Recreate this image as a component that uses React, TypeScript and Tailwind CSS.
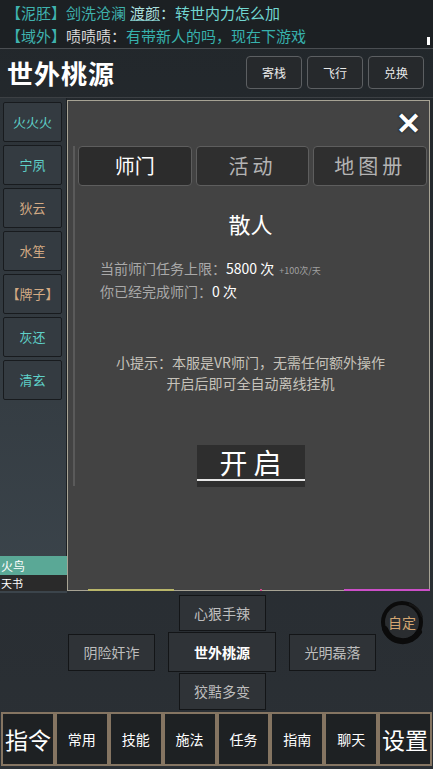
import React from 'react';

const font = { fontFamily: '"Noto Sans CJK SC", "Noto Sans", sans-serif' };

const sideItems = [
  { name: '火火火', color: 'text-[#5fd1c9]' },
  { name: '宁夙', color: 'text-[#5fd1c9]' },
  { name: '狄云', color: 'text-[#d3aa84]' },
  { name: '水笙', color: 'text-[#d3aa84]' },
  { name: '【牌子】', color: 'text-[#d3aa84]' },
  { name: '灰还', color: 'text-[#5fd1c9]' },
  { name: '清玄', color: 'text-[#5fd1c9]' },
];

const navItems = ['指令', '常用', '技能', '施法', '任务', '指南', '聊天', '设置'];

export default function App() {
  return (
    <div
      style={font}
      className="w-[433px] h-[769px] overflow-hidden flex flex-col bg-gradient-to-b from-[#22272b] to-[#2b3035] text-white"
    >
      {/* chat */}
      <div className="h-[49px] bg-[#1c2023] px-[6px] pt-[1px] text-[15px] leading-[23px] relative border-b border-[#4a4e52]">
        <div className="flex">
          <span className="text-[#3fb2ae]">【泥胚】</span>
          <span className="text-[#3fb2ae] mr-[4px]">剑洗沧澜</span>
          <span className="text-[#a9dfdc] underline decoration-[#6aa]">渡颜</span>
          <span className="text-[#a9dfdc]">：</span>
          <span className="text-[#71d6d1]">转世内力怎么加</span>
        </div>
        <div className="flex">
          <span className="text-[#3fb2ae]">【域外】</span>
          <span className="text-[#d8d8d8]">啧啧啧：</span>
          <span className="text-[#37b2ad]">有带新人的吗，现在下游戏</span>
        </div>
        <div className="absolute right-[3px] bottom-[3px] w-[3px] h-[8px] bg-white" />
      </div>

      {/* header */}
      <div className="h-[49px] flex items-center justify-between pl-[7px] pr-[9px] border-b border-[#3c4044]">
        <div className="text-[26px] tracking-[1px] text-white font-bold">世外桃源</div>
        <div className="flex gap-[5px]">
          {['寄栈', '飞行', '兑换'].map((b) => (
            <div
              key={b}
              className="w-[56px] h-[33px] flex items-center justify-center rounded-[4px] border border-[#5c5f62] bg-[#26292c] text-[12px] text-[#e8e8e8]"
            >
              {b}
            </div>
          ))}
        </div>
      </div>

      {/* middle */}
      <div className="h-[496px] flex">
        <div className="w-[67px] flex flex-col bg-gradient-to-b from-[#2c3237] to-[#3b444b]">
          <div className="flex-1 flex flex-col gap-[3px] pl-[3px] pr-[4px] pt-[4px] border-r border-[#1c2024]">
            {sideItems.map((s) => (
              <div
                key={s.name}
                className={`h-[40px] flex items-center justify-center bg-[#343b41] border border-[#181b1e] rounded-[2px] text-[13px] ${s.color}`}
              >
                {s.name}
              </div>
            ))}
          </div>
          <div className="h-[19px] bg-[#5aa896] text-[12px] leading-[19px] pl-[1px] text-white">火鸟</div>
          <div className="h-[16px] bg-[#2a2a2a] text-[11px] leading-[16px] pl-[1px] text-white mb-[2px]">天书</div>
        </div>

        <div className="flex-1 mt-[2px] mb-[2px] mr-[3px] bg-[#434343] border border-[#a7a394] relative flex flex-col">
          <div className="absolute left-[5px] top-[45px] w-[2px] h-[340px] bg-[#5a5a5a]" />
          <div className="absolute right-[8px] top-[6px] text-[30px] leading-[28px] font-black text-white [text-shadow:0_0_2px_#1a2a33,0_0_2px_#1a2a33,0_0_1px_#1a2a33]">
            ✕
          </div>
          <div className="absolute -bottom-[1px] left-[20px] w-[86px] h-[2px] bg-[#b9b66a]" />
          <div className="absolute -bottom-[1px] left-[192px] w-[2px] h-[2px] bg-[#d04a8a]" />
          <div className="absolute -bottom-[1px] right-[-1px] w-[86px] h-[2px] bg-[#cc4fc8]" />

          <div className="flex gap-[4px] pl-[10px] pr-[2px] mt-[45px]">
            <div className="flex-1 h-[40px] flex items-center justify-center rounded-[4px] border border-[#5e5e5e] bg-[#2c2c2c] text-[20px] text-white">
              师门
            </div>
            <div className="flex-1 h-[40px] flex items-center justify-center rounded-[4px] border border-[#5e5e5e] bg-[#2f2f2f] text-[20px] tracking-[4px] text-[#b4b4b4]">
              活动
            </div>
            <div className="flex-1 h-[40px] flex items-center justify-center rounded-[4px] border border-[#5e5e5e] bg-[#2f2f2f] text-[20px] tracking-[4px] text-[#b4b4b4]">
              地图册
            </div>
          </div>

          <div className="mt-[22px] text-center text-[22px] leading-[30px] text-white pl-[4px]">散人</div>

          <div className="mt-[20px] pl-[32px] text-[14px] leading-[21px]">
            <div className="flex items-baseline">
              <span className="text-[#a9a9a9]">当前师门任务上限：</span>
              <span className="text-white">5800 次</span>
              <span className="text-[#a0a0a0] text-[9px] ml-[5px]">+100次/天</span>
            </div>
            <div className="flex items-baseline">
              <span className="text-[#a9a9a9]">你已经完成师门：</span>
              <span className="text-white">0 次</span>
            </div>
          </div>

          <div className="mt-[50px] text-center text-[14px] leading-[21px] text-[#c6c2ba] pl-[4px]">
            <div>小提示：本服是VR师门，无需任何额外操作</div>
            <div>开启后即可全自动离线挂机</div>
          </div>

          <div className="mt-[51px] flex justify-center pl-[4px]">
            <div className="w-[108px] h-[42px] bg-[#2e2e2e] flex flex-col">
              <div className="h-[34px] flex items-end justify-center text-[28px] leading-[34px] tracking-[6px] pl-[6px] text-white">
                开启
              </div>
              <div className="h-[2px] bg-[#e6e6e6]" />
            </div>
          </div>
        </div>
      </div>

      {/* bottom controls */}
      <div className="h-[119px] relative flex flex-col items-center pt-[2px] pl-[11px]">
        <div className="w-[87px] h-[36px] flex items-center justify-center bg-[#2f3337] border border-[#131517] text-[14px] text-[#bdbdbd]">
          心狠手辣
        </div>
        <div className="flex items-center gap-[13px] mt-[1px]">
          <div className="w-[87px] h-[37px] flex items-center justify-center bg-[#2f3337] border border-[#131517] text-[14px] text-[#bdbdbd]">
            阴险奸诈
          </div>
          <div className="w-[108px] h-[40px] flex items-center justify-center bg-[#2f3337] border border-[#131517] text-[14px] font-bold text-white">
            世外桃源
          </div>
          <div className="w-[87px] h-[37px] flex items-center justify-center bg-[#2f3337] border border-[#131517] text-[14px] text-[#bdbdbd]">
            光明磊落
          </div>
        </div>
        <div className="w-[87px] h-[37px] mt-[1px] flex items-center justify-center bg-[#2f3337] border border-[#131517] text-[14px] text-[#bdbdbd]">
          狡黠多变
        </div>
        <div className="absolute right-[8px] top-[6px] w-[46px] h-[46px] flex items-center justify-center">
          <svg width="46" height="46" viewBox="0 0 46 46" className="absolute inset-0">
            <circle cx="23" cy="23" r="19" fill="#2a2d30" stroke="#0b0b0b" strokeWidth="4" />
            <path d="M6 30 A19 19 0 0 0 40 33" fill="none" stroke="#0b0b0b" strokeWidth="6" strokeLinecap="round" />
            <path d="M30 5 A19 19 0 0 1 43 18" fill="none" stroke="#151515" strokeWidth="2" />
          </svg>
          <span className="relative text-[14px] text-[#d3a571]">自定</span>
        </div>
      </div>

      {/* nav */}
      <div className="h-[54px] flex px-[1px] mb-[3px]">
        {navItems.map((n, i) => (
          <div
            key={n}
            className={`flex-1 flex items-center justify-center bg-[#1e2123] border-2 border-[#857562] text-white ${
              i === 0 || i === 7 ? 'text-[23px]' : 'text-[14px]'
            }`}
          >
            {n}
          </div>
        ))}
      </div>
    </div>
  );
}
